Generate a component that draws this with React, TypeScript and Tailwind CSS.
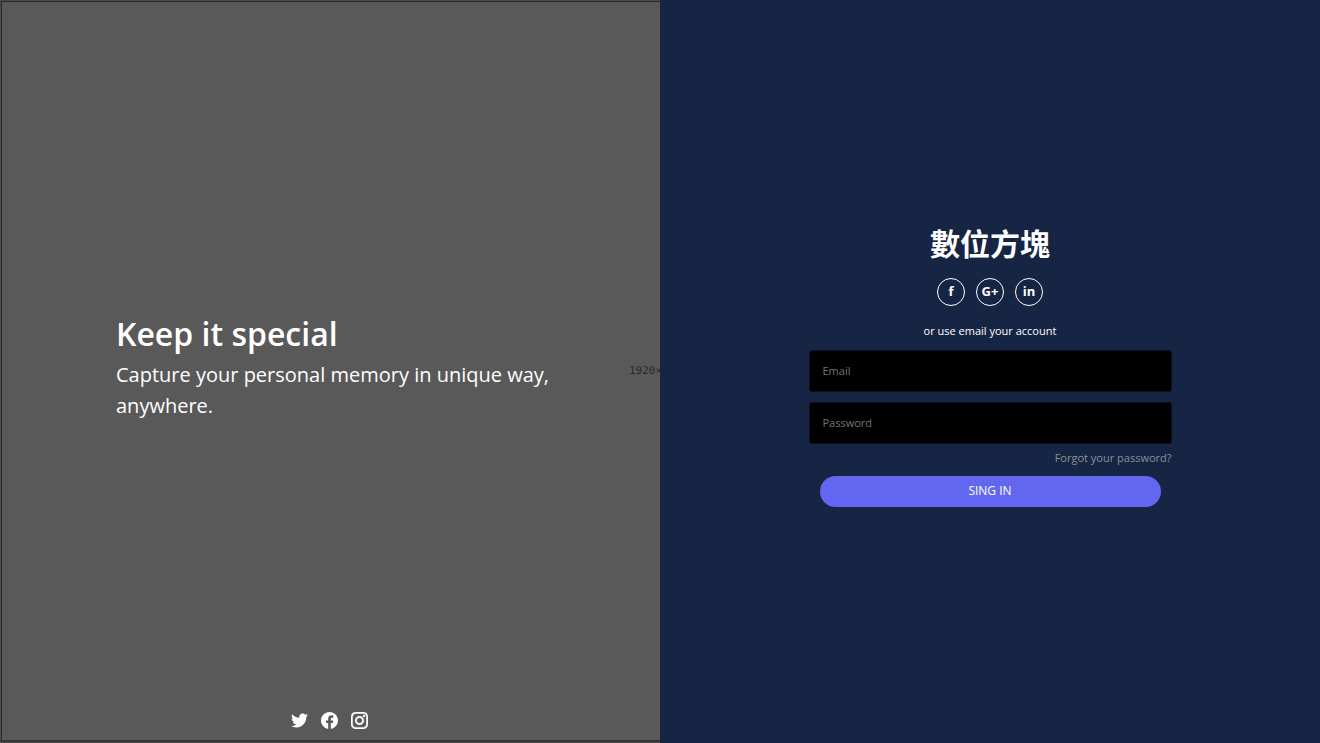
import React from "react";

const FONT = "font-['Open_Sans','Noto_Sans_CJK_TC',sans-serif]";

function TwitterIcon() {
  return (
    <svg className="size-4.25 fill-current" viewBox="0 0 24 24" aria-hidden="true">
      <path d="M24 4.557c-.883.392-1.832.656-2.828.775 1.017-.609 1.798-1.574 2.165-2.724-.951.564-2.005.974-3.127 1.195-.897-.957-2.178-1.555-3.594-1.555-3.179 0-5.515 2.966-4.797 6.045-4.091-.205-7.719-2.165-10.148-5.144-1.29 2.213-.669 5.108 1.523 6.574-.806-.026-1.566-.247-2.229-.616-.054 2.281 1.581 4.415 3.949 4.89-.693.188-1.452.232-2.224.084.626 1.956 2.444 3.379 4.6 3.419-2.07 1.623-4.678 2.348-7.29 2.04 2.179 1.397 4.768 2.212 7.548 2.212 9.142 0 14.307-7.721 13.995-14.646.962-.695 1.797-1.562 2.457-2.549z" />
    </svg>
  );
}

function FacebookIcon() {
  return (
    <svg className="size-4.25 fill-current" viewBox="0 0 24 24" aria-hidden="true">
      <path d="M24 12.073c0-6.627-5.373-12-12-12s-12 5.373-12 12c0 5.99 4.388 10.954 10.125 11.854v-8.385H7.078v-3.47h3.047V9.43c0-3.007 1.792-4.669 4.533-4.669 1.312 0 2.686.235 2.686.235v2.953H15.83c-1.491 0-1.956.925-1.956 1.874v2.25h3.328l-.532 3.47h-2.796v8.385C19.612 23.027 24 18.062 24 12.073z" />
    </svg>
  );
}

function InstagramIcon() {
  return (
    <svg className="size-4.25 fill-current stroke-current" strokeWidth="0.7" viewBox="0 0 24 24" aria-hidden="true">
      <path d="M12 2.163c3.204 0 3.584.012 4.85.07 3.252.148 4.771 1.691 4.919 4.919.058 1.265.069 1.645.069 4.849 0 3.205-.012 3.584-.069 4.849-.149 3.225-1.664 4.771-4.919 4.919-1.266.058-1.644.07-4.85.07-3.204 0-3.584-.012-4.849-.07-3.26-.149-4.771-1.699-4.919-4.92-.058-1.265-.07-1.644-.07-4.849 0-3.204.013-3.583.07-4.849.149-3.227 1.664-4.771 4.919-4.919 1.266-.057 1.645-.069 4.849-.069zm0-2.163c-3.259 0-3.667.014-4.947.072-4.358.2-6.78 2.618-6.98 6.98-.059 1.281-.073 1.689-.073 4.948 0 3.259.014 3.668.072 4.948.2 4.358 2.618 6.78 6.98 6.98 1.281.058 1.689.072 4.948.072 3.259 0 3.668-.014 4.948-.072 4.354-.2 6.782-2.618 6.979-6.98.059-1.28.073-1.689.073-4.948 0-3.259-.014-3.667-.072-4.947-.196-4.354-2.617-6.78-6.979-6.98-1.281-.059-1.69-.073-4.949-.073zm0 5.838c-3.403 0-6.162 2.759-6.162 6.162s2.759 6.163 6.162 6.163 6.162-2.759 6.162-6.163c0-3.403-2.759-6.162-6.162-6.162zm0 10.162c-2.209 0-4-1.79-4-4 0-2.209 1.791-4 4-4s4 1.791 4 4c0 2.21-1.791 4-4 4zm6.406-11.845c-.796 0-1.441.645-1.441 1.44s.645 1.44 1.441 1.44c.795 0 1.439-.645 1.439-1.44s-.644-1.44-1.439-1.44z" />
    </svg>
  );
}

const socialLinks = [
  { name: "Twitter", Icon: TwitterIcon },
  { name: "Facebook", Icon: FacebookIcon },
  { name: "Instagram", Icon: InstagramIcon },
];

const providers = [
  { name: "Facebook", label: "f" },
  { name: "Google", label: "G+" },
  { name: "LinkedIn", label: "in" },
];

const inputClass =
  "block h-[42px] w-full rounded-[3px] border border-[#0b1120] bg-black px-[13px] text-[11px] text-white outline-none placeholder:text-[#71757d]";

export default function App() {
  return (
    <main className={`flex min-h-screen bg-[#162544] text-white ${FONT}`}>
      <section className="flex w-1/2 border border-r-0 border-[#4c4c4f] bg-[#595959]">
        <div className="grid w-full grid-rows-[1fr_auto_1fr] border border-r-0 border-b-2 border-[#29292b] border-b-[#353537]">
          <div />
          <div className="flex items-center pl-[114px]">
            <div className="w-[440px] shrink-0 pb-2">
              <h1 className="text-[32px] leading-[42px] font-semibold">Keep it special</h1>
              <p className="mt-1 text-[20px] leading-[31px]">
                Capture your personal memory in unique way, anywhere.
              </p>
            </div>
            <span className="ml-auto w-[31px] shrink-0 overflow-hidden font-['DejaVu_Sans_Mono',monospace] text-[11px] whitespace-nowrap text-[#29292b]">
              1920×
            </span>
          </div>
          <nav className="flex items-end justify-center gap-[13px] pr-1 pb-[11px]">
            {socialLinks.map(({ name, Icon }) => (
              <a key={name} href="#" aria-label={name}>
                <Icon />
              </a>
            ))}
          </nav>
        </div>
      </section>

      <section className="flex w-1/2 items-center justify-center">
        <div className="w-[55%] pb-3.5 text-center">
          <h2 className="text-[30px] leading-[42px] font-semibold">數位方塊</h2>
          <div className="flex justify-center gap-[11px] pt-[13px] pb-4">
            {providers.map(({ name, label }) => (
              <button
                key={name}
                type="button"
                aria-label={name}
                className="flex size-7 items-center justify-center rounded-full border border-white text-[13px] font-bold"
              >
                {label}
              </button>
            ))}
          </div>
          <p className="text-[11px] leading-[18px]">or use email your account</p>
          <form className="pt-2.5" onSubmit={(event) => event.preventDefault()}>
            <input type="email" aria-label="Email" placeholder="Email" className={inputClass} />
            <input
              type="password"
              aria-label="Password"
              placeholder="Password"
              className={`mt-2.5 ${inputClass}`}
            />
            <div className="pt-[5px] text-right text-[11px] leading-[18px] text-[#8b8f98]">
              <a href="#">Forgot your password?</a>
            </div>
            <div className="px-[11px] pt-[9px]">
              <button
                type="submit"
                className="block h-[31px] w-full rounded-full bg-[#6366f1] text-[12px]"
              >
                SING IN
              </button>
            </div>
          </form>
        </div>
      </section>
    </main>
  );
}
